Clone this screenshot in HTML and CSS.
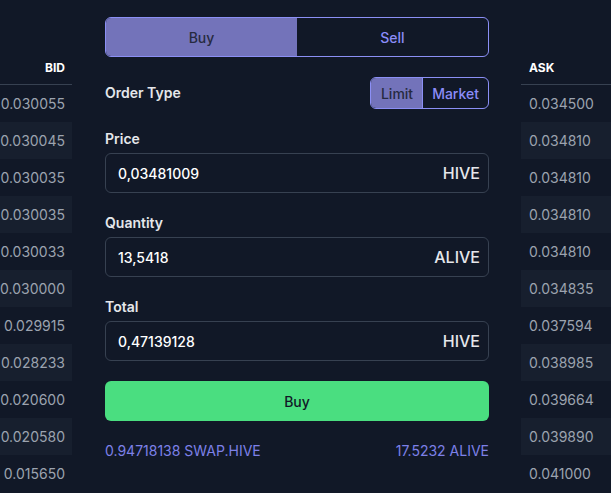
FILE: index.html
```html
<!DOCTYPE html>
<html lang="en">
<head>
    <meta charset="UTF-8">
    <meta name="viewport" content="width=device-width, initial-scale=1.0">
    <title>Trade ALIVE</title>
    <link rel="stylesheet" href="styles.css">
</head>
<body>
    <div class="market">
        <div class="book bids">
            <div class="book-head">BID</div>
            <div class="book-row">0.030055</div>
            <div class="book-row">0.030045</div>
            <div class="book-row">0.030035</div>
            <div class="book-row">0.030035</div>
            <div class="book-row">0.030033</div>
            <div class="book-row">0.030000</div>
            <div class="book-row">0.029915</div>
            <div class="book-row">0.028233</div>
            <div class="book-row">0.020600</div>
            <div class="book-row">0.020580</div>
            <div class="book-row">0.015650</div>
        </div>

        <div class="order-panel">
            <div class="side-toggle">
                <button class="side active">Buy</button>
                <button class="side">Sell</button>
            </div>

            <div class="order-type">
                <span class="field-label">Order Type</span>
                <div class="type-toggle">
                    <button class="type active">Limit</button>
                    <button class="type">Market</button>
                </div>
            </div>

            <div class="field">
                <label class="field-label" for="price">Price</label>
                <div class="input-box">
                    <input id="price" type="text" value="0,03481009">
                    <span class="unit">HIVE</span>
                </div>
            </div>

            <div class="field">
                <label class="field-label" for="quantity">Quantity</label>
                <div class="input-box">
                    <input id="quantity" type="text" value="13,5418">
                    <span class="unit">ALIVE</span>
                </div>
            </div>

            <div class="field">
                <label class="field-label" for="total">Total</label>
                <div class="input-box">
                    <input id="total" type="text" value="0,47139128">
                    <span class="unit">HIVE</span>
                </div>
            </div>

            <button class="submit">Buy</button>

            <div class="balances">
                <span>0.94718138 SWAP.HIVE</span>
                <span>17.5232 ALIVE</span>
            </div>
        </div>

        <div class="book asks">
            <div class="book-head">ASK</div>
            <div class="book-row">0.034500</div>
            <div class="book-row">0.034810</div>
            <div class="book-row">0.034810</div>
            <div class="book-row">0.034810</div>
            <div class="book-row">0.034810</div>
            <div class="book-row">0.034835</div>
            <div class="book-row">0.037594</div>
            <div class="book-row">0.038985</div>
            <div class="book-row">0.039664</div>
            <div class="book-row">0.039890</div>
            <div class="book-row">0.041000</div>
        </div>
    </div>
</body>
</html>
```

FILE: styles.css
```css
body {
    margin: 0;
    background: #111827;
    color: #e5e7eb;
    font-family: Inter, "Noto Sans", sans-serif;
    font-size: 14px;
    overflow: hidden;
}

.market {
    display: flex;
    height: 493px;
}

.book {
    overflow: hidden;
    box-sizing: border-box;
}

.bids {
    width: 72px;
    flex: none;
    text-align: right;
}

.asks {
    flex: 1;
    text-align: left;
}

.book-head {
    height: 85px;
    box-sizing: border-box;
    padding: 0 7px 8px;
    display: flex;
    align-items: flex-end;
    font-size: 12px;
    line-height: 16px;
    font-weight: 700;
    color: #fff;
    border-bottom: 1px solid #374151;
}

.bids .book-head {
    justify-content: flex-end;
}

.book-row {
    height: 37px;
    line-height: 37px;
    color: #9ca3af;
    white-space: nowrap;
}

.bids .book-row {
    padding: 0 7px 0 0;
}

.asks .book-row {
    padding: 0 8px;
}

.asks .book-head {
    padding: 0 8px 8px;
}

.book-row:nth-child(odd) {
    background: #171f2e;
}

.order-panel {
    width: 384px;
    flex: none;
    margin: 0 32px 0 33px;
    padding-top: 17px;
    display: flex;
    flex-direction: column;
}

button {
    font-family: inherit;
    font-size: 14px;
    font-weight: 500;
    cursor: pointer;
}

.side-toggle {
    display: flex;
    height: 40px;
    border: 1px solid #8b8ff5;
    border-radius: 6px;
    overflow: hidden;
    box-sizing: border-box;
}

.side {
    flex: 1;
    border: none;
    background: transparent;
    color: #8b8cf8;
}

.side.active,
.type.active {
    background: #7373ba;
    color: #262a40;
}

.order-type {
    display: flex;
    justify-content: space-between;
    align-items: center;
    margin-top: 20px;
    height: 32px;
}

.type-toggle {
    display: flex;
    height: 32px;
    border: 1px solid #8b8ff5;
    border-radius: 6px;
    overflow: hidden;
    box-sizing: border-box;
}

.type {
    border: none;
    background: transparent;
    color: #8b8cf8;
    padding: 0 9px;
}

.type.active {
    padding: 0 9px 0 10px;
    border-right: 1px solid #8b8ff5;
}

.field-label {
    display: block;
    font-weight: 600;
    line-height: 20px;
    color: #e5e7eb;
}

.field {
    margin-top: 20px;
}

.input-box {
    display: flex;
    align-items: center;
    height: 40px;
    margin-top: 4px;
    border: 1px solid #374151;
    border-radius: 6px;
    box-sizing: border-box;
    padding: 0 8px 0 12px;
}

.input-box input {
    flex: 1;
    min-width: 0;
    border: none;
    background: transparent;
    color: #fff;
    font-family: inherit;
    font-size: 14px;
    font-weight: 500;
    padding: 0;
    outline: none;
}

.unit {
    font-size: 16px;
    font-weight: 500;
    color: #e5e7eb;
}

.submit {
    margin-top: 20px;
    height: 40px;
    border: none;
    border-radius: 6px;
    background: #4ade80;
    color: #111827;
}

.balances {
    display: flex;
    justify-content: space-between;
    margin-top: 20px;
    line-height: 20px;
    color: #7d80e8;
}
```
